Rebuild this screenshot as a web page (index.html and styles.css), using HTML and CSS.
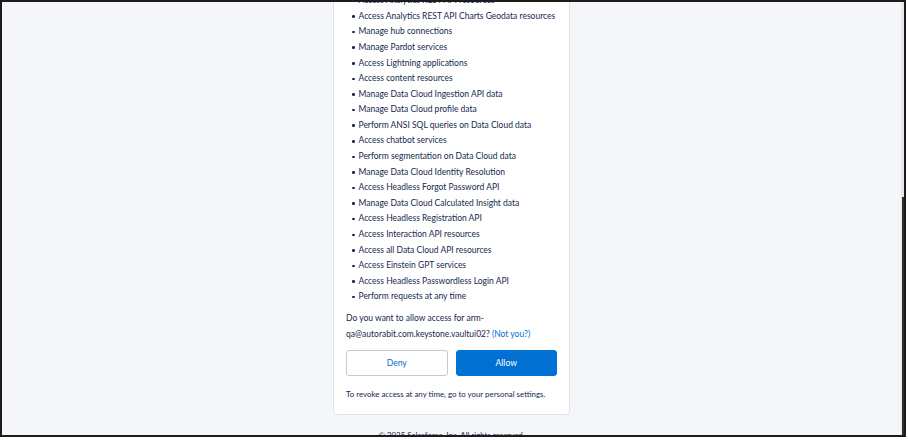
FILE: index.html
```html
<!DOCTYPE html>
<html lang="en">
<head>
<meta charset="utf-8">
<title>Allow Access?</title>
<link rel="stylesheet" href="styles.css">
</head>
<body>
<div class="frame">
  <div class="viewport">
    <main class="page">
      <div class="card">
        <ul class="scopes">
          <li>Access and manage your data</li>
          <li>Access your basic information</li>
          <li>Access the Identity URL service</li>
          <li>Access Analytics REST API resources</li>
          <li>Access Analytics REST API Charts Geodata resources</li>
          <li>Manage hub connections</li>
          <li>Manage Pardot services</li>
          <li>Access Lightning applications</li>
          <li>Access content resources</li>
          <li>Manage Data Cloud Ingestion API data</li>
          <li>Manage Data Cloud profile data</li>
          <li>Perform ANSI SQL queries on Data Cloud data</li>
          <li>Access chatbot services</li>
          <li>Perform segmentation on Data Cloud data</li>
          <li>Manage Data Cloud Identity Resolution</li>
          <li>Access Headless Forgot Password API</li>
          <li>Manage Data Cloud Calculated Insight data</li>
          <li>Access Headless Registration API</li>
          <li>Access Interaction API resources</li>
          <li>Access all Data Cloud API resources</li>
          <li>Access Einstein GPT services</li>
          <li>Access Headless Passwordless Login API</li>
          <li>Perform requests at any time</li>
        </ul>
        <p class="question">Do you want to allow access for arm-qa@autorabit.com.keystone.vaultui02? <a class="link" href="#">(Not you?)</a></p>
        <div class="actions">
          <button class="btn btn-deny" type="button">Deny</button>
          <button class="btn btn-allow" type="button">Allow</button>
        </div>
        <p class="revoke">To revoke access at any time, go to your personal settings.</p>
      </div>
      <footer class="footer">© 2025 Salesforce, Inc. All rights reserved.</footer>
    </main>
  </div>
  <div class="scrollbar"><div class="thumb"></div></div>
</div>
</body>
</html>
```

FILE: styles.css
```css
html, body {
  margin: 0;
  padding: 0;
  background: #ffffff;
}

body {
  font-family: Lato, "Open Sans", "Liberation Sans", sans-serif;
  color: #14294d;
}

.frame {
  width: 902px;
  height: 433px;
  border: 2px solid #1c1c1c;
  background: #f4f6f9;
  display: flex;
  overflow: hidden;
}

.viewport {
  flex: 1;
  display: flex;
  flex-direction: column;
  justify-content: flex-end;
  overflow: hidden;
}

.page {
  display: flex;
  flex-direction: column;
  align-items: center;
  margin-bottom: -8px;
}

.card {
  width: 212px;
  padding: 0 11px 12px 12px;
  background: #ffffff;
  border: 1px solid #dfe3e8;
  border-radius: 4px;
}

.scopes {
  margin: 0;
  padding: 0 0 0 13px;
  list-style: none;
  font-size: 8.5px;
  line-height: 15.6px;
  white-space: nowrap;
}

.scopes li {
  display: flex;
  align-items: center;
  gap: 4px;
  margin-left: -7px;
}

.scopes li::before {
  content: "";
  width: 2.5px;
  height: 2.5px;
  border-radius: 50%;
  background: #14294d;
  flex: none;
}

.question {
  margin: 5px 0 0;
  font-size: 8.5px;
  line-height: 16px;
}

.link {
  color: #0070d2;
  text-decoration: none;
}

.actions {
  display: flex;
  gap: 8px;
  margin-top: 8px;
  padding-right: 1px;
}

.btn {
  flex: 1;
  height: 26px;
  border-radius: 3px;
  font-family: inherit;
  font-size: 8.6px;
  cursor: pointer;
}

.btn-deny {
  background: #ffffff;
  border: 1px solid #c9c9c9;
  color: #0070d2;
}

.btn-allow {
  background: #0070d2;
  border: 1px solid #0070d2;
  color: #ffffff;
}

.revoke {
  margin: 10px 0 0;
  font-size: 7.9px;
  line-height: 16px;
}

.footer {
  margin-top: 12px;
  font-size: 7.9px;
  line-height: 16px;
}

.scrollbar {
  width: 3px;
  background: #e6e8eb;
  display: flex;
  flex-direction: column;
  justify-content: flex-end;
}

.thumb {
  height: 238px;
  background: #2e2e2e;
  margin-left: 1px;
}
```
